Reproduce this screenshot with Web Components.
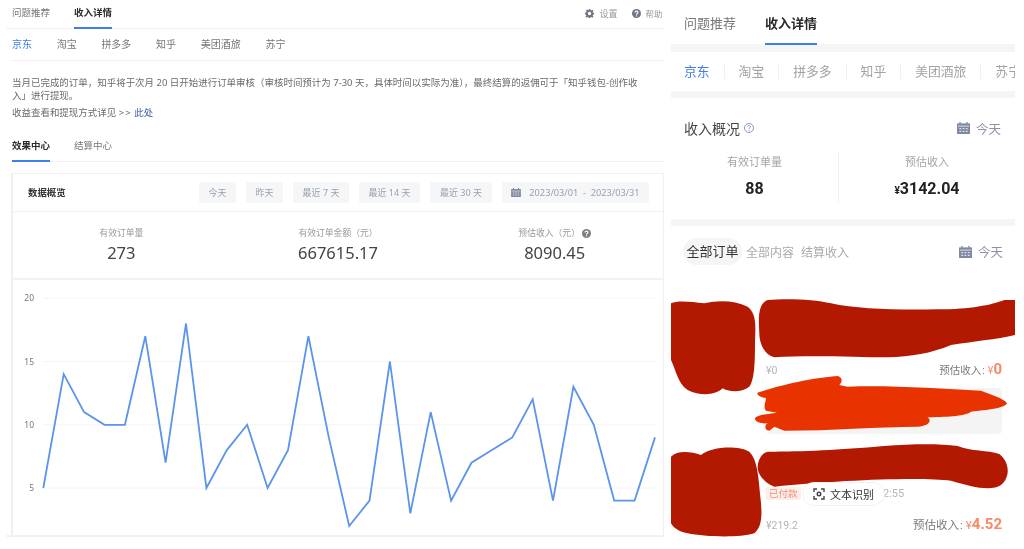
<!DOCTYPE html>
<html lang="zh">
<head>
<meta charset="utf-8">
<title>收入详情</title>
<style>
  html, body { margin: 0; height: 100%; background: #fff; overflow: hidden; }
  body {
    display: flex;
    width: 1024px;
    height: 549px;
    font-family: "Noto Sans", "Noto Sans CJK SC", sans-serif;
    color: #666;
  }
</style>
</head>
<body>

<desk-panel>
  <tab-bar style="margin-left:-6px;padding-left:6px">
    <tab-item>问题推荐</tab-item>
    <tab-item active>收入详情</tab-item>
    <tool-links slot="end"></tool-links>
  </tab-bar>
  <plat-tabs>
    <b>京东</b><span>淘宝</span><span>拼多多</span><span>知乎</span><span>美团酒旅</span><span>苏宁</span>
  </plat-tabs>
  <notice-text></notice-text>
  <tab-bar>
    <tab-item active>效果中心</tab-item>
    <tab-item>结算中心</tab-item>
  </tab-bar>
  <data-card></data-card>
</desk-panel>

<phone-panel></phone-panel>

<script>
// little helper so every element only has to say what its shadow holds
class Shadowed extends HTMLElement {
  constructor() {
    super();
    this.attachShadow({ mode: 'open' });
    this.shadowRoot.innerHTML = `<style>${this.constructor.css}</style>${this.constructor.html}`;
  }
}

const icons = {
  gear: `<svg viewBox="0 0 16 16" width="9" height="9"><path fill="#6f7680" fill-rule="evenodd" d="M6.6 0h2.800l.4 2.200 1.300.6 1.900-1.300 2 2-1.300 1.900.6 1.300 2.200.4v2.800l-2.200.4-.6 1.300 1.300 1.900-2 2-1.900-1.300-1.300.6-.4 2.200H6.600l-.4-2.200-1.300-.6-1.900 1.300-2-2 1.300-1.900-.6-1.300L0 9.400V6.600l2.200-.4.6-1.300L1.500 3l2-2 1.900 1.300 1.300-.6zM8 5a3 3 0 1 0 0 6 3 3 0 0 0 0-6z"/></svg>`,
  help: (size, fill) => `<svg viewBox="0 0 16 16" width="${size}" height="${size}"><circle cx="8" cy="8" r="8" fill="${fill}"/><path fill="none" stroke="#fff" stroke-width="2" d="M5.300 6.200C5.300 4.600 6.500 3.700 8 3.700s2.700.9 2.700 2.300c0 2-2.700 2-2.700 4"/><circle cx="8" cy="12.300" r="1.200" fill="#fff"/></svg>`,
  helpLine: `<svg viewBox="0 0 16 16" width="10" height="10"><circle cx="8" cy="8" r="7.200" fill="none" stroke="#7f93b8" stroke-width="1.500"/><path fill="none" stroke="#7f93b8" stroke-width="1.500" d="M5.600 6.300C5.600 5 6.700 4.200 8 4.200s2.400.8 2.400 2c0 1.800-2.400 1.800-2.400 3.500"/><circle cx="8" cy="11.700" r="1" fill="#7f93b8"/></svg>`,
  calendar: (w, h) => `<svg viewBox="0 0 14 13" width="${w}" height="${h}"><path fill="#7e88a0" d="M0 1.500h14V13H0z"/><path fill="#7e88a0" d="M2.500 0h1.500v2H2.500zM10 0h1.500v2H10z"/><path fill="#fff" d="M1 4h12v.8H1z"/><path fill="#dfe2ea" d="M2.500 6.500h2v1.300h-2zM6 6.500h2v1.300H6zM9.500 6.500h2v1.300h-2zM2.500 9.500h2v1.300h-2zM6 9.500h2v1.300H6zM9.500 9.500h2v1.300h-2z"/></svg>`
};

customElements.define('tab-item', class extends Shadowed {
  static css = `
    :host {
      display: block;
      height: var(--tab-h, 29px);
      margin-bottom: -1px;
      box-sizing: border-box;
      font-size: var(--tab-size, 9.500px);
      line-height: var(--tab-line, 26px);
      color: #777;
      white-space: nowrap;
    }
    :host([active]) {
      color: #2b2b2b;
      font-weight: 700;
      border-bottom: 2px solid #3f7fe8;
    }`;
  static html = `<slot></slot>`;
});

customElements.define('tab-bar', class extends Shadowed {
  static css = `
    :host {
      display: flex;
      justify-content: space-between;
      height: var(--bar-h, 29px);
      box-sizing: border-box;
      border-bottom: 1px solid #f2f2f2;
    }
    .tabs { display: flex; gap: var(--tab-gap, 24px); }`;
  static html = `<div class="tabs"><slot></slot></div><slot name="end"></slot>`;
});

customElements.define('tool-links', class extends Shadowed {
  static css = `
    :host { display: flex; color: #999; height: 26px; align-items: center; margin-right: 1.500px; }
    span { display: flex; align-items: center; gap: 5px; font-size: 9px; }
    span + span { gap: 4px; margin-left: 15px; font-size: 8.500px; }`;
  static html = `<span>${icons.gear}设置</span><span>${icons.help(9, '#6f7680')}帮助</span>`;
});

customElements.define('plat-tabs', class extends Shadowed {
  static css = `
    :host {
      display: flex;
      gap: 24.700px;
      height: 32px;
      box-sizing: border-box;
      border-bottom: 1px solid #f2f2f2;
      font-size: 10px;
      line-height: 31px;
      color: #777;
    }
    ::slotted(b) { font-weight: 400; color: #3f7fe8; }`;
  static html = `<slot></slot>`;
});

customElements.define('notice-text', class extends Shadowed {
  static css = `
    :host { display: block; margin: 14.500px 0 14px; font-size: 9.470px; line-height: 13px; color: #6b6b6b; }
    p { margin: 0; width: 628px; }
    p + p { margin-top: 4px; }
    i { font-style: normal; letter-spacing: 1.200px; }
    a { color: #3d5d9e; text-decoration: none; }`;
  static html = `
    <p>当月已完成的订单，知乎将于次月 20 日开始进行订单审核（审核时间预计为 7-30 天，具体时间以实际为准），最终结算的返佣可于「知乎钱包-创作收入」进行提现。</p>
    <p>收益查看和提现方式详见 <i>&gt;&gt;</i> <a href="#">此处</a></p>`;
});

customElements.define('range-btn', class extends Shadowed {
  static css = `
    :host {
      display: flex;
      align-items: center;
      justify-content: center;
      gap: 8px;
      box-sizing: border-box;
      height: 21px;
      border-radius: 2px;
      background: #f5f6f8;
      font-size: 9px;
      color: #9a9fa8;
      white-space: pre;
    }
    svg { display: block; }`;
  static html = `<slot></slot>`;
});

customElements.define('stat-cell', class extends Shadowed {
  static css = `
    :host { display: block; text-align: center; }
    .k { font-size: 8.800px; line-height: 13px; color: #999; height: 13px; display: flex; align-items: center; justify-content: center; gap: 2px; }
    .v { font-size: 16.500px; line-height: 24px; margin-top: 1px; color: #444; }`;
  static html = `<div class="k"><slot name="label"></slot></div><div class="v"><slot></slot></div>`;
});

customElements.define('line-chart', class extends Shadowed {
  static css = `
    :host { display: block; height: 255px; }
    svg { display: block; overflow: hidden; }
    text { font-size: 8.500px; fill: #777; font-family: "Noto Sans", sans-serif; }`;
  static html = `<svg width="650" height="255" viewBox="13 280 650 255"></svg>`;
  connectedCallback() {
    const counts = [5, 14, 11, 10, 10, 17, 7, 18, 5, 8, 10, 5, 8, 17, 9, 2, 4, 15, 3, 11, 4, 7, 8, 9, 12, 4, 13, 10, 4, 4, 9];
    const yAt = v => 488 - (v - 5) * 12.650;
    const grid = [20, 15, 10, 5].map(v => `
      <line x1="43" x2="655" y1="${yAt(v)}" y2="${yAt(v)}" stroke="#f4f4f4"/>
      <text x="34" y="${yAt(v) + 3}" text-anchor="end">${v}</text>`).join('');
    const pts = counts.map((v, i) => `${(43.300 + i * 20.390).toFixed(1)},${yAt(v).toFixed(1)}`).join(' ');
    this.shadowRoot.querySelector('svg').innerHTML =
      `${grid}<polyline points="${pts}" fill="none" stroke="#5b94ec" stroke-width="1.800" stroke-linejoin="miter"/>`;
  }
});

customElements.define('data-card', class extends Shadowed {
  static css = `
    :host { display: block; margin: 11px 0 0 -1px; border: 1px solid #f0f0f0; border-bottom: 0; border-left-width: 2px; }
    header {
      display: flex;
      align-items: center;
      height: 37px;
      padding: 0 14px 0 15px;
      border-bottom: 1px solid #f0f0f0;
    }
    h2 { margin: 0 auto 0 0; font-size: 9.400px; font-weight: 700; color: #333; }
    .row { display: flex; gap: 10px; }
    .stats {
      display: grid;
      grid-template-columns: repeat(3, 1fr);
      height: 68px;
      padding-top: 15px;
      box-sizing: border-box;
      border-bottom: 2px solid #f2f2f2;
    }`;
  static html = `
    <header>
      <h2>数据概览</h2>
      <div class="row">
        <range-btn style="width:37px">今天</range-btn>
        <range-btn style="width:37px">昨天</range-btn>
        <range-btn style="width:56px">最近 7 天</range-btn>
        <range-btn style="width:61px">最近 14 天</range-btn>
        <range-btn style="width:62px">最近 30 天</range-btn>
        <range-btn style="width:147px;font-size:9.200px">${icons.calendar(10, 9)}2023/03/01  -  2023/03/31</range-btn>
      </div>
    </header>
    <div class="stats">
      <stat-cell><span slot="label">有效订单量</span>273</stat-cell>
      <stat-cell><span slot="label">有效订单金额（元）</span>667615.17</stat-cell>
      <stat-cell><span slot="label">预估收入（元）</span>8090.45</stat-cell>
    </div>
    <line-chart></line-chart>`;
  connectedCallback() {
    const label = this.shadowRoot.querySelectorAll('stat-cell')[2];
    const mark = document.createElement('span');
    mark.slot = 'label';
    mark.style.cssText = 'display:flex;height:13px;align-items:center';
    mark.innerHTML = icons.help(9, '#7d7d7d');
    label.append(mark);
  }
});

customElements.define('desk-panel', class extends Shadowed {
  static css = `
    :host {
      display: block;
      box-sizing: border-box;
      flex: 0 0 670px;
      height: 549px;
      padding: 0 7px 0 12px;
      filter: blur(.35px);
    }
    .rule { margin-left: -6px; height: 2px; background: #f2f2f2; }`;
  static html = `<slot></slot><div class="rule"></div>`;
});

customElements.define('cal-today', class extends Shadowed {
  static css = `
    :host { display: flex; align-items: center; gap: 6px; font-size: 12.500px; color: #8b93a3; }
    svg { display: block; }`;
  static html = `${icons.calendar(13, 12)}今天`;
});

customElements.define('order-row', class extends Shadowed {
  static css = `
    :host {
      display: grid;
      grid-template-columns: 95px 1fr;
      padding-right: 13px;
      height: var(--row-h);
      box-sizing: border-box;
      font-family: Roboto, "Noto Sans CJK SC", sans-serif;
    }
    .body { grid-column: 2; padding-top: var(--title-h); }
    .meta { display: flex; justify-content: space-between; align-items: baseline; line-height: 16px; font-size: 10.500px; color: #b5b5b5; }
    .est { font-size: var(--est-size); color: #7a7a7a; }
    .est i { font-style: normal; margin: 0 3px 0 1px; }`;
  static html = `
    <div class="body">
      <slot name="status"></slot>
      <div class="meta"><span><slot name="amount"></slot></span><span class="est">预估收入<i>:</i><slot name="est"></slot></span></div>
      <slot></slot>
    </div>`;
});

customElements.define('redact-marks', class extends Shadowed {
  static css = `
    :host { position: absolute; left: 0; top: 270px; width: 344px; height: 279px; z-index: 1; }
    svg { display: block; }`;
  static html = `
    <svg width="344" height="279" viewBox="0 0 1032 837">
      <g fill="#b31800" style="filter:blur(1px)">
        <path d="M0 100C20 90 60 95 100 100C140 90 190 90 230 110C255 130 255 160 252 220C252 280 250 330 235 350C210 370 170 365 155 355C135 375 90 380 50 360C20 340 15 300 0 270Z"/>
        <path d="M290 90C350 85 430 88 480 100C560 118 680 120 800 118C900 118 960 105 1000 90L1032 90L1032 195C980 208 900 215 840 225C780 250 720 260 650 262C560 262 420 255 310 262C280 255 265 220 265 190C262 140 262 100 290 90Z"/>
        <path d="M0 560C20 540 60 545 90 555C120 530 200 525 235 545C260 570 262 620 268 680C275 740 272 770 250 790C200 805 100 800 50 790C20 785 5 770 0 760Z"/>
        <path d="M290 545C400 545 500 540 640 528C720 522 800 520 860 528C900 545 950 540 985 552C1015 575 1020 620 990 645C960 665 900 650 840 632C750 620 500 630 310 650C280 640 258 610 260 590C262 565 275 548 290 545Z"/>
      </g>
      <path fill="#e83300" d="M260 368C300 355 400 325 500 318C515 322 515 335 505 345L530 350C650 345 800 355 930 362C960 375 1000 385 1008 400C1000 415 950 420 900 425C880 440 820 440 770 442C785 455 770 468 740 470C620 470 480 482 340 482L310 470L295 482C280 480 280 465 290 460C270 462 250 455 252 445C260 432 300 432 318 428L285 422C275 410 285 395 285 385C270 382 255 375 260 368Z"/>
    </svg>`;
});

customElements.define('scan-pill', class extends Shadowed {
  static css = `
    :host {
      position: absolute;
      left: 131px;
      top: 482px;
      z-index: 2;
      display: flex;
      align-items: center;
      justify-content: center;
      gap: 5px;
      width: 83px;
      height: 24px;
      box-sizing: border-box;
      border: 1px solid #f1f1f1;
      border-radius: 12px;
      background: #fff;
      font-size: 11px;
      color: #333;
    }`;
  static html = `
    <svg viewBox="0 0 12 12" width="12" height="12" fill="none" stroke="#444" stroke-width="1.400">
      <path d="M1 4V1h3M8 1h3v3M11 8v3H8M4 11H1V8"/><circle cx="6" cy="6" r="1.800"/>
    </svg>文本识别`;
});

customElements.define('phone-panel', class extends Shadowed {
  static css = `
    :host {
      display: block;
      position: relative;
      flex: 0 0 344px;
      height: 549px;
      overflow: hidden;
      filter: blur(.35px);
      font-family: Roboto, "Noto Sans CJK SC", sans-serif;
      --tab-size: 13px;
      --tab-h: 45px;
      --tab-line: 48px;
      --bar-h: 44px;
      --tab-gap: 29px;
    }
    tab-bar { border: 0; padding-left: 13px; }
    .band { height: 8px; background: #f5f5f5; }
    .band.thin { height: 7px; }
    .plats { display: flex; height: 39px; align-items: center; padding-left: 13px; font-size: 12.800px; color: #a3a3a3; white-space: nowrap; }
    .plats span { padding: 0 14px; border-right: 1px solid #f0f0f0; line-height: 15px; }
    .plats span:first-child { padding-left: 0; color: #3f7fe8; }
    .plats span:last-child { border: 0; }
    .income { height: 121px; box-sizing: border-box; padding: 20px 14px 0 13px; }
    .head { display: flex; align-items: center; height: 20px; }
    h2 { margin: 0; font-size: 14px; font-weight: 400; color: #444; }
    .head svg { margin-left: 4px; }
    cal-today { margin-left: auto; }
    .nums { display: grid; grid-template-columns: 167px 1fr; height: 46px; margin: 14px -14px 0 -13px; }
    .nums > div { text-align: center; }
    .nums > div + div { border-left: 1px solid #f2f2f2; }
    .k { font-size: 11px; line-height: 20px; padding-top: 1px; color: #a5a5a5; }
    .v { font-size: 16px; line-height: 22px; margin-top: 5px; font-weight: 700; color: #222; }
    .v small { font-size: 10px; }
    .filters { display: flex; align-items: center; height: 27px; margin: 12px 12px 0 12px; font-size: 12px; color: #aaa; }
    .filters b { font-weight: 400; font-size: 13px; color: #333; background: #f5f5f5; border-radius: 14px; padding: 0 3.500px; line-height: 27px; margin-right: 4px; }
    .filters span + span { margin-left: 7px; }
    .orders { padding-top: 35px; }
    .note { height: 46px; margin-top: 9px; border-radius: 4px; background: #f4f4f4; }
    .badge { display: inline-block; height: 13px; line-height: 13px; padding: 0 3px; background: #fdeeea; border-radius: 2px; color: #f0907a; font-size: 9.500px; }
    .time { font-size: 11px; color: #b5b5b5; margin-left: 3px; }
    .status { display: flex; align-items: center; height: 13px; margin-bottom: 16px; }
    .money { color: #f58a66; }
    .money strong { font-size: 15px; }`;
  static html = `
    <tab-bar>
      <tab-item>问题推荐</tab-item>
      <tab-item active>收入详情</tab-item>
    </tab-bar>
    <div class="band"></div>
    <div class="plats"><span>京东</span><span>淘宝</span><span>拼多多</span><span>知乎</span><span>美团酒旅</span><span>苏宁</span></div>
    <div class="band thin"></div>
    <section class="income">
      <div class="head">
        <h2>收入概况</h2>
        ${icons.helpLine}
        <cal-today></cal-today>
      </div>
      <div class="nums">
        <div><div class="k">有效订单量</div><div class="v">88</div></div>
        <div><div class="k">预估收入</div><div class="v"><small>¥</small>3142.04</div></div>
      </div>
    </section>
    <div class="band thin"></div>
    <div class="filters">
      <b>全部订单</b><span>全部内容</span><span>结算收入</span>
      <cal-today></cal-today>
    </div>
    <div class="orders">
      <order-row style="--row-h:147px;--title-h:61px;--est-size:10.500px">
        <span slot="amount">¥0</span>
        <span slot="est" class="money">¥<strong>0</strong></span>
        <div class="note"></div>
      </order-row>
      <order-row style="--row-h:100px;--title-h:40px;--est-size:11.500px">
        <div slot="status" class="status"><span class="badge">已付款</span><span class="time"> 2023-03-31 12:42:55</span></div>
        <span slot="amount">¥219.2</span>
        <span slot="est" class="money">¥<strong>4.52</strong></span>
      </order-row>
    </div>
    <redact-marks></redact-marks>
    <scan-pill></scan-pill>`;
});
</script>
</body>
</html>
